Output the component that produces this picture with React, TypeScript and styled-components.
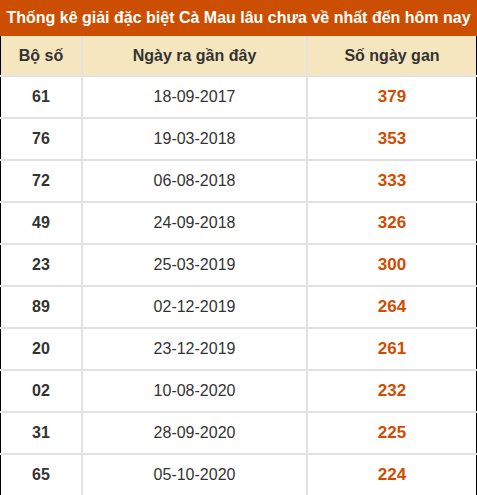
import React from "react";
import styled, { createGlobalStyle } from "styled-components";

const Global = createGlobalStyle`
  html, body { margin: 0; padding: 0; background: #fff; }
  body { font-family: "Liberation Sans", Arial, sans-serif; }
`;

const Wrap = styled.div`
  width: 477px;
  box-sizing: border-box;
`;

const Title = styled.div`
  background: #cc4e00;
  color: #fff;
  font-weight: bold;
  font-size: 16px;
  height: 36px;
  line-height: 36px;
  text-align: center;
  white-space: nowrap;
`;

const Table = styled.table`
  width: 100%;
  box-sizing: border-box;
  border-collapse: collapse;
  border-left: 1px solid #000;
  border-right: 1px solid #000;
  border-bottom: 1px solid #000;
  table-layout: fixed;
`;

const Th = styled.th<{ $w?: number }>`
  width: ${(p) => (p.$w ? `${p.$w}px` : "auto")};
  background: #f5e6bf;
  color: #333;
  font-size: 16px;
  font-weight: bold;
  height: 39px;
  padding: 0;
  text-align: center;
  border-left: 2px solid #e2e2e2;
  &:first-child { border-left: none; }
`;

const Td = styled.td<{ $kind: "num" | "date" | "gan" }>`
  height: 40px;
  padding: 0;
  text-align: center;
  border-top: 2px solid #e2e2e2;
  border-left: 2px solid #e2e2e2;
  &:first-child { border-left: none; }
  font-size: ${(p) => (p.$kind === "gan" ? "17px" : "16px")};
  font-weight: ${(p) => (p.$kind === "date" ? "normal" : "bold")};
  color: ${(p) => (p.$kind === "gan" ? "#d04c00" : "#333")};
`;

const rows: [string, string, string][] = [
  ["61", "18-09-2017", "379"],
  ["76", "19-03-2018", "353"],
  ["72", "06-08-2018", "333"],
  ["49", "24-09-2018", "326"],
  ["23", "25-03-2019", "300"],
  ["89", "02-12-2019", "264"],
  ["20", "23-12-2019", "261"],
  ["02", "10-08-2020", "232"],
  ["31", "28-09-2020", "225"],
  ["65", "05-10-2020", "224"],
];

export default function App() {
  return (
    <Wrap>
      <Global />
      <Title>Thống kê giải đặc biệt Cà Mau lâu chưa về nhất đến hôm nay</Title>
      <Table>
        <thead>
          <tr>
            <Th $w={80}>Bộ số</Th>
            <Th $w={223}>Ngày ra gần đây</Th>
            <Th>Số ngày gan</Th>
          </tr>
        </thead>
        <tbody>
          {rows.map((r) => (
            <tr key={r[0]}>
              <Td $kind="num">{r[0]}</Td>
              <Td $kind="date">{r[1]}</Td>
              <Td $kind="gan">{r[2]}</Td>
            </tr>
          ))}
        </tbody>
      </Table>
    </Wrap>
  );
}
